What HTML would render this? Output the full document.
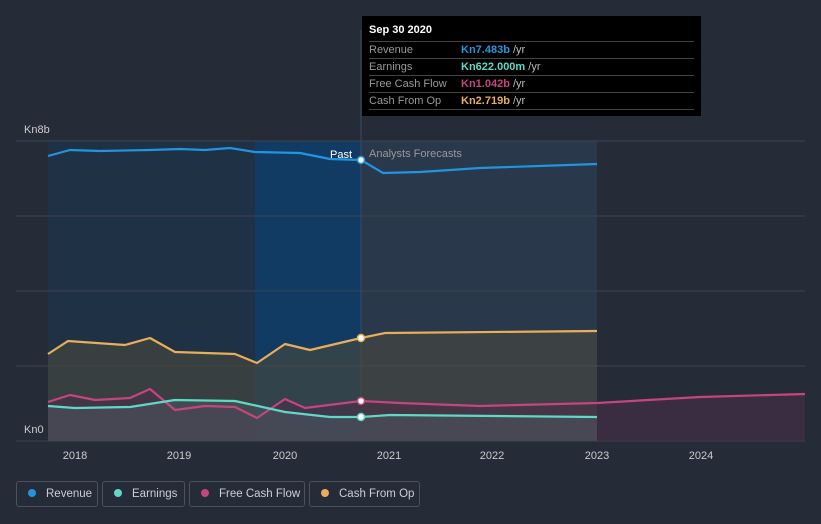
<!DOCTYPE html>
<html><head><style>
body{margin:0;background:#252c38;font-family:"Liberation Sans",sans-serif;width:821px;height:524px;overflow:hidden;position:relative}
.tip{position:absolute;left:362px;top:16px;width:339px;height:100px;background:#000;color:#fff;font-size:11px}
.tip .h{font-weight:bold;padding:8px 0 0 7px;height:17px}
.tip .r{margin:0 7px;border-top:1px solid #444;height:16px;line-height:16px;color:#999;position:relative}
.tip .r b{position:absolute;left:92px;font-weight:bold}
.tip .r span{color:#bbb;font-weight:normal}
.leg{position:absolute;top:481px;height:26px;border:1px solid #4a5160;border-radius:3px;color:#ccd;font-size:11.5px;line-height:25px;box-sizing:border-box;white-space:nowrap;overflow:hidden}
.leg i{display:inline-block;width:8px;height:8px;border-radius:50%;margin:0 10px 0 11px;vertical-align:0}
</style></head><body>
<svg width="821" height="524" style="position:absolute;left:0;top:0">
<rect x="48" y="141" width="313" height="300" fill="#1f3247" opacity=".9"/>
<rect x="255" y="141" width="106" height="300" fill="#123b63"/>
<rect x="361" y="141" width="236" height="300" fill="#2a3a4e" opacity=".9"/>
<g stroke="#3c4452" stroke-width="1"><line x1="16" y1="141" x2="805" y2="141"/><line x1="16" y1="216" x2="805" y2="216"/><line x1="16" y1="291" x2="805" y2="291"/><line x1="16" y1="366" x2="805" y2="366"/><line x1="16" y1="441" x2="805" y2="441"/></g>
<line x1="361" y1="30" x2="361" y2="441" stroke="#3a4a60"/>
<path d="M48,354 L68,341 125,345 150,338 175,352 235,354 257,363 285,344 310,350 361,338 385,333 597,331 L597,441 48,441Z" fill="#4a4a3e" opacity=".6"/>
<path d="M48,402 L70,395 95,400 130,398 150,389 175,410 205,406 235,407 257,418 285,399 305,408 361,401 400,403 480,406 597,403 700,397 805,394 L805,441 48,441Z" fill="#4a2f48" opacity=".6"/>
<path d="M48,406 L75,408 130,407 175,400 235,401 285,412 330,417 361,417 390,415 597,417 L597,441 48,441Z" fill="#4a5a62" opacity=".5"/>
<g fill="none" stroke-width="2.2" stroke-linejoin="round">
<path d="M48,156 L70,150 100,151 150,150 180,149 205,150 230,148 255,152 300,153 330,159 361,160 383,173 420,172 480,168 597,164" stroke="#2394df"/>
<path d="M48,354 L68,341 125,345 150,338 175,352 235,354 257,363 285,344 310,350 361,338 385,333 597,331" stroke="#e8ae5a"/>
<path d="M48,402 L70,395 95,400 130,398 150,389 175,410 205,406 235,407 257,418 285,399 305,408 361,401 400,403 480,406 597,403 700,397 805,394" stroke="#c4467f"/>
<path d="M48,406 L75,408 130,407 175,400 235,401 285,412 330,417 361,417 390,415 597,417" stroke="#5fd9c6"/>
</g>
<circle cx="361" cy="160" r="3.5" fill="#fff" stroke="#2394df" stroke-width="1.5"/>
<circle cx="361" cy="338" r="3.5" fill="#fff" stroke="#e8ae5a" stroke-width="1.5"/>
<circle cx="361" cy="401" r="3.5" fill="#fff" stroke="#c4467f" stroke-width="1.5"/>
<circle cx="361" cy="417" r="3.5" fill="#fff" stroke="#5fd9c6" stroke-width="1.5"/>
<g font-size="11" fill="#ccc">
<text x="24" y="133">Kn8b</text><text x="24" y="433">Kn0</text>
<text x="352" y="158" text-anchor="end" fill="#fff">Past</text>
<text x="369" y="157" fill="#999">Analysts Forecasts</text>
<g text-anchor="middle"><text x="75" y="459">2018</text><text x="179" y="459">2019</text><text x="285" y="459">2020</text><text x="389" y="459">2021</text><text x="492" y="459">2022</text><text x="597" y="459">2023</text><text x="701" y="459">2024</text></g>
</g>
</svg>
<div class="tip"><div class="h">Sep 30 2020</div>
<div class="r">Revenue<b style="color:#2394df">Kn7.483b <span>/yr</span></b></div>
<div class="r">Earnings<b style="color:#5fd9c6">Kn622.000m <span>/yr</span></b></div>
<div class="r">Free Cash Flow<b style="color:#c4467f">Kn1.042b <span>/yr</span></b></div>
<div class="r" style="border-bottom:1px solid #444">Cash From Op<b style="color:#e8ae5a">Kn2.719b <span>/yr</span></b></div>
</div>
<div class="leg" style="left:16px;width:82px"><i style="background:#2394df"></i>Revenue</div>
<div class="leg" style="left:102px;width:83px"><i style="background:#5fd9c6"></i>Earnings</div>
<div class="leg" style="left:189px;width:116px"><i style="background:#c4467f"></i>Free Cash Flow</div>
<div class="leg" style="left:309px;width:111px"><i style="background:#e8ae5a"></i>Cash From Op</div>
</body></html>
